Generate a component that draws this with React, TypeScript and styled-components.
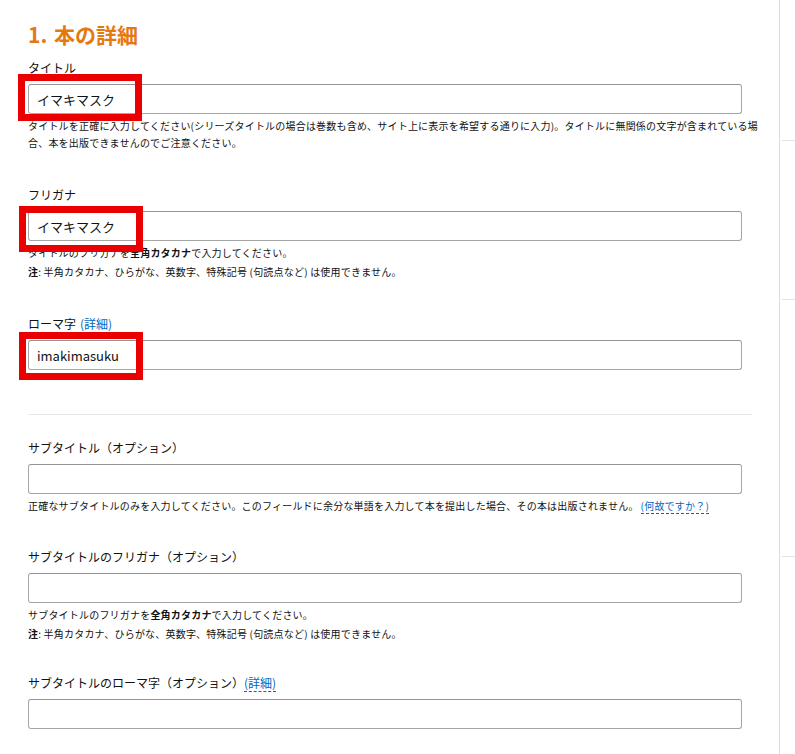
import React from 'react';
import styled, { createGlobalStyle } from 'styled-components';

const GlobalStyle = createGlobalStyle`
  html, body {
    margin: 0;
    padding: 0;
    background: #fff;
  }
  body {
    font-family: "Noto Sans CJK JP", "Noto Sans", sans-serif;
    color: #111;
  }
`;

interface MarkProps {
  $top: number;
  $left: number;
  $height: number;
}

interface FieldData {
  label: string;
  detail?: 'plain' | 'dashed';
  value?: string;
  mark?: MarkProps;
  help?: React.ReactNode;
  note?: boolean;
  gap: number;
}

const Page = styled.div`
  display: grid;
  grid-template-columns: 779px 1fr;
  min-height: 754px;
`;

const Main = styled.main`
  padding: 22px 7px 0 28px;
`;

const Heading = styled.h1`
  margin: 0 0 12px;
  font-size: 21px;
  line-height: 25px;
  font-weight: bold;
  color: #e47911;
  word-spacing: 2px;
`;

const Field = styled.div<{ $gap: number }>`
  position: relative;
  margin-bottom: ${(p) => p.$gap}px;
`;

const Label = styled.div`
  font-size: 12px;
  line-height: 18px;
  color: #111;
`;

const DetailLink = styled.a<{ $dashed?: boolean }>`
  color: #0066c0;
  text-decoration: none;
  margin-left: ${(p) => (p.$dashed ? '0' : '4px')};
  border-bottom: ${(p) => (p.$dashed ? '1px dashed #0066c0' : 'none')};
`;

const InputWrap = styled.div`
  position: relative;
  margin-top: 7px;
  width: 714px;
`;

const Input = styled.input`
  display: block;
  box-sizing: border-box;
  width: 100%;
  height: 30px;
  padding: 0 8px;
  border: 1px solid #a6a6a6;
  border-top-color: #949494;
  border-radius: 3px;
  font-family: "Noto Sans CJK JP", "Noto Sans", sans-serif;
  font-size: 13px;
  color: #111;
  background: #fff;
  outline: none;
`;

const Mark = styled.div<MarkProps>`
  position: absolute;
  top: ${(p) => p.$top}px;
  left: ${(p) => p.$left}px;
  width: 124px;
  height: ${(p) => p.$height}px;
  box-sizing: border-box;
  border: 7px solid #ea0000;
  pointer-events: none;
`;

const Help = styled.p`
  margin: 3px 0 0;
  font-size: 10px;
  line-height: 17px;
  letter-spacing: 0.2px;
  color: #111;
`;

const Note = styled(Help)`
  margin-top: 2px;
`;

const WhyLink = styled.a`
  color: #0066c0;
  text-decoration: none;
  border-bottom: 1px dashed #0066c0;
  margin-left: 2px;
`;

const Divider = styled.hr`
  width: 724px;
  margin: 0 0 24px;
  border: none;
  border-top: 1px solid #e7e7e7;
`;

const Side = styled.aside`
  border-left: 1px solid #dddddd;
  display: flex;
  flex-direction: column;
`;

const SideSection = styled.div<{ $h: number }>`
  height: ${(p) => p.$h}px;
  border-bottom: 1px solid #e3e3e3;
  margin-left: 2px;
`;

const NoteText = () => (
  <Note>
    <b>注</b>: 半角カタカナ、ひらがな、英数字、特殊記号 (句読点など) は使用できません。
  </Note>
);

const topFields: FieldData[] = [
  {
    label: 'タイトル',
    value: 'イマキマスク',
    mark: { $top: -10, $left: -10, $height: 47 },
    help: 'タイトルを正確に入力してください(シリーズタイトルの場合は巻数も含め、サイト上に表示を希望する通りに入力)。タイトルに無関係の文字が含まれている場合、本を出版できませんのでご注意ください。',
    gap: 35,
  },
  {
    label: 'フリガナ',
    value: 'イマキマスク',
    mark: { $top: -5, $left: -9, $height: 46 },
    help: (
      <>
        タイトルのフリガナを<b>全角カタカナ</b>で入力してください。
      </>
    ),
    note: true,
    gap: 35,
  },
  {
    label: 'ローマ字',
    detail: 'plain',
    value: 'imakimasuku',
    mark: { $top: -8, $left: -9, $height: 48 },
    gap: 44,
  },
];

const subFields: FieldData[] = [
  {
    label: 'サブタイトル（オプション）',
    help: (
      <>
        正確なサブタイトルのみを入力してください。このフィールドに余分な単語を入力して本を提出した場合、その本は出版されません。
        <WhyLink href="#">(何故ですか？)</WhyLink>
      </>
    ),
    gap: 34,
  },
  {
    label: 'サブタイトルのフリガナ（オプション）',
    help: (
      <>
        サブタイトルのフリガナを<b>全角カタカナ</b>で入力してください。
      </>
    ),
    note: true,
    gap: 32,
  },
  {
    label: 'サブタイトルのローマ字（オプション）',
    detail: 'dashed',
    gap: 20,
  },
];

const FormField = ({ field }: { field: FieldData }) => (
  <Field $gap={field.gap}>
    <Label>
      {field.label}
      {field.detail && (
        <DetailLink href="#" $dashed={field.detail === 'dashed'}>
          (詳細)
        </DetailLink>
      )}
    </Label>
    <InputWrap>
      <Input type="text" defaultValue={field.value ?? ''} />
      {field.mark && <Mark {...field.mark} />}
    </InputWrap>
    {field.help && <Help>{field.help}</Help>}
    {field.note && <NoteText />}
  </Field>
);

export default function App() {
  return (
    <>
      <GlobalStyle />
      <Page>
        <Main>
          <Heading>1. 本の詳細</Heading>
          {topFields.map((f) => (
            <FormField key={f.label} field={f} />
          ))}
          <Divider />
          {subFields.map((f) => (
            <FormField key={f.label} field={f} />
          ))}
        </Main>
        <Side>
          <SideSection $h={140} />
          <SideSection $h={158} />
          <SideSection $h={256} />
        </Side>
      </Page>
    </>
  );
}
